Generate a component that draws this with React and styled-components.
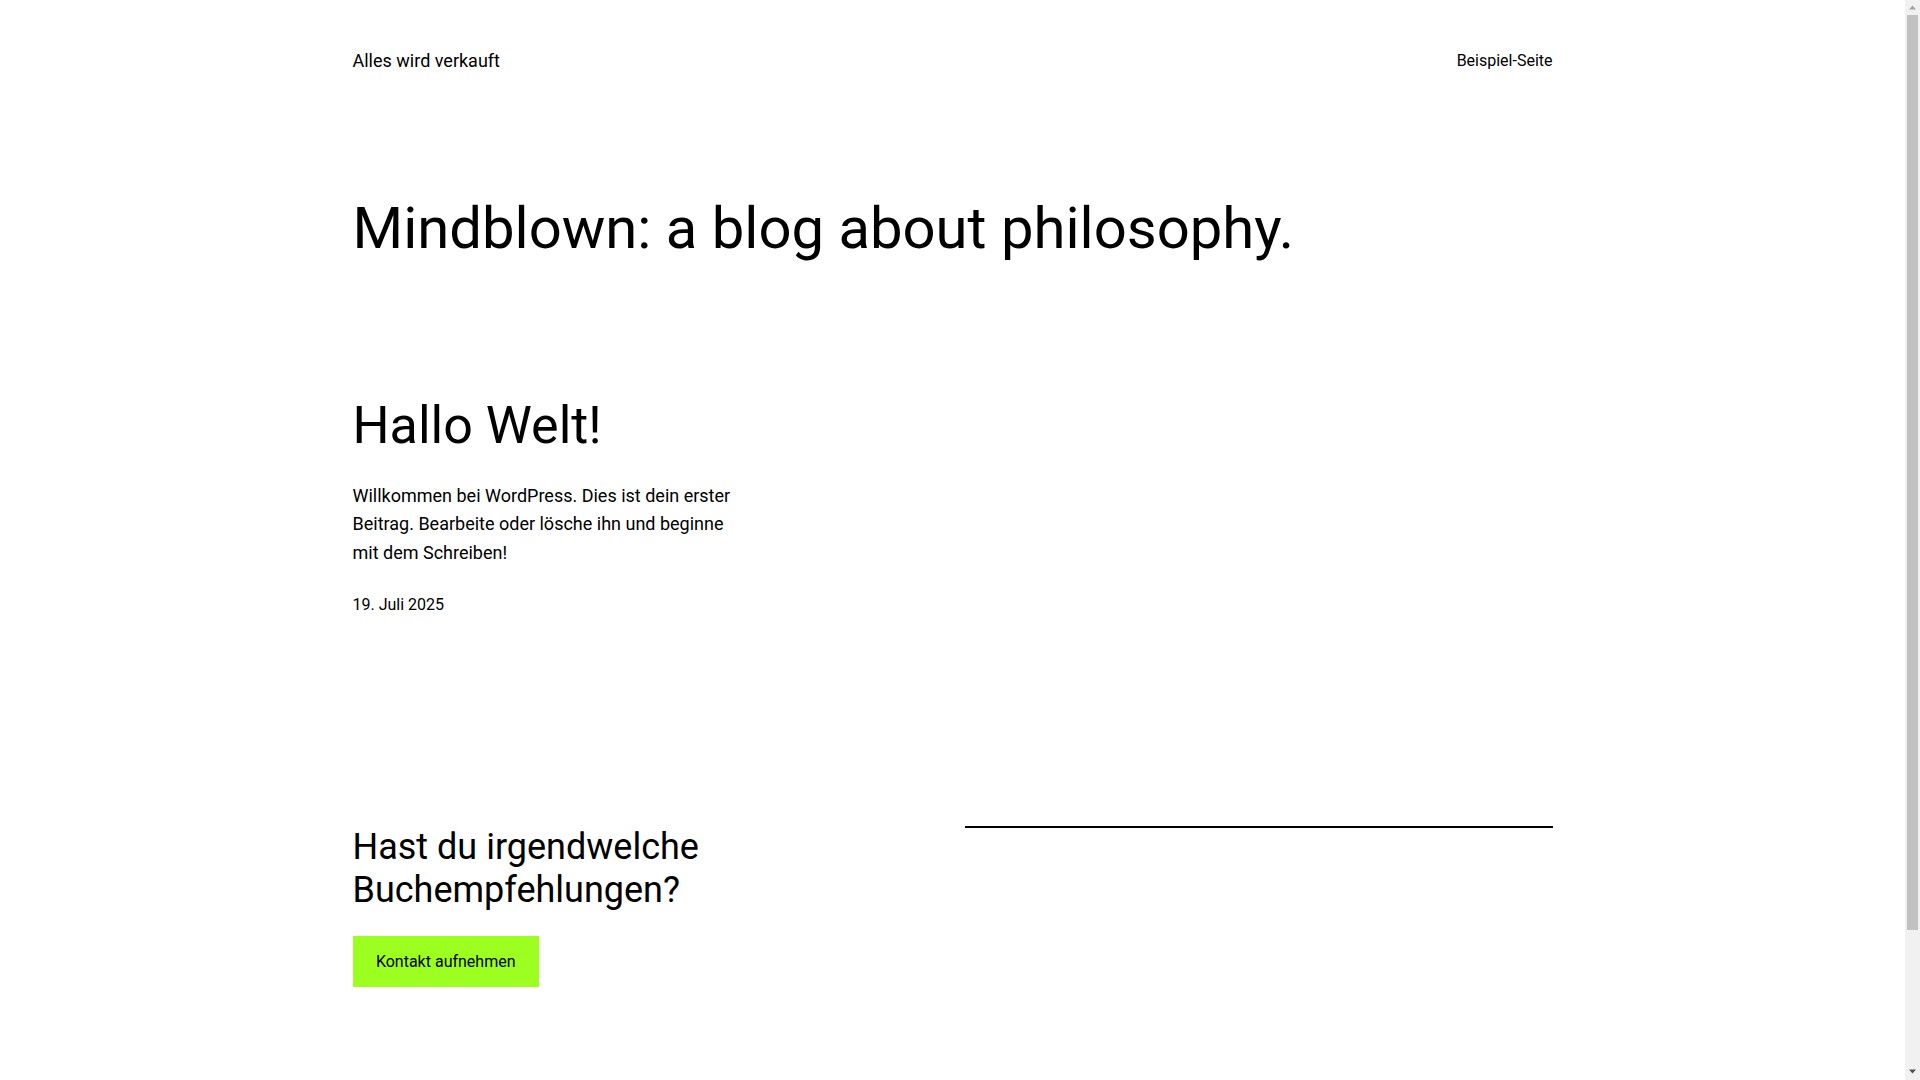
import React from "react";
import styled, { createGlobalStyle } from "styled-components";

const Global = createGlobalStyle`
  html, body { margin: 0; padding: 0; background: #fff; }
  body { font-family: Roboto, "Liberation Sans", sans-serif; color: #000; }
  * { box-sizing: border-box; }
`;

const Shell = styled.div`
  display: flex;
  align-items: flex-start;
`;

const Main = styled.main`
  flex: 1;
  min-width: 0;
`;

const Page = styled.div`
  width: 1200px;
  margin: 0 auto;
  padding-top: 50px;
  padding-bottom: 252px;
`;

const Header = styled.header`
  display: flex;
  justify-content: space-between;
  align-items: center;
`;

const SiteTitle = styled.a`
  font-size: 18px;
  line-height: 1.2;
  color: #000;
  text-decoration: none;
`;

const NavLink = styled.a`
  font-size: 16px;
  line-height: 1.2;
  color: #000;
  text-decoration: none;
`;

const PageTitle = styled.h1`
  margin: 125.4px 0 0;
  font-weight: 400;
  font-size: 58px;
  line-height: 1.1;
`;

const PostGrid = styled.div`
  display: grid;
  grid-template-columns: repeat(3, 1fr);
  gap: 24px;
  margin-top: 135.8px;
`;

const Post = styled.article`
  display: flex;
  flex-direction: column;
`;

const PostTitle = styled.h2`
  margin: 0;
  font-weight: 400;
  font-size: 52px;
  line-height: 1.1;
`;

const Excerpt = styled.p`
  margin: 28.3px 0 0;
  font-size: 18px;
  line-height: 28.3px;
`;

const PostDate = styled.time`
  display: block;
  margin-top: 25.6px;
  font-size: 16px;
  line-height: 1.5;
`;

const Cta = styled.section`
  display: grid;
  grid-template-columns: 1fr 1fr;
  gap: 24px;
  margin-top: 209.2px;
  align-items: start;
`;

const CtaText = styled.div`
  display: flex;
  flex-direction: column;
  align-items: flex-start;
`;

const CtaHeading = styled.h2`
  margin: 0;
  font-weight: 400;
  font-size: 36px;
  line-height: 43.2px;
`;

const Button = styled.a`
  display: inline-block;
  margin-top: 24px;
  background: #9dff20;
  color: #000;
  text-decoration: none;
  font-size: 16px;
  line-height: 1.2;
  padding: 15.75px 23.4px;
`;

const Rule = styled.hr`
  margin: 0 0 0;
  border: none;
  border-top: 2px solid #000;
`;

/* fake classic scrollbar at the right edge of the window */
const ScrollBar = styled.div`
  position: sticky;
  top: 0;
  flex: 0 0 15px;
  width: 15px;
  height: 100vh;
  background: #f1f1f1;
  display: flex;
  flex-direction: column;
`;

const ScrollButton = styled.div`
  flex: 0 0 15px;
  display: flex;
  align-items: center;
  justify-content: center;
`;

const Track = styled.div`
  flex: 1;
  padding: 0 2px;
`;

const Thumb = styled.div`
  height: 915px;
  background: #c1c1c1;
`;

const Arrow = ({ up, color }) => (
  <svg width="15" height="15" viewBox="0 0 15 15">
    {up ? (
      <polygon points="4,9.5 11,9.5 7.5,5.5" fill={color} />
    ) : (
      <polygon points="4,4.5 11,4.5 7.5,8.5" fill={color} />
    )}
  </svg>
);

export default function App() {
  return (
    <>
      <Global />
      <Shell>
        <Main>
          <Page>
            <Header>
              <SiteTitle href="#">Alles wird verkauft</SiteTitle>
              <NavLink href="#">Beispiel-Seite</NavLink>
            </Header>
            <PageTitle>Mindblown: a blog about philosophy.</PageTitle>
            <PostGrid>
              <Post>
                <PostTitle>Hallo Welt!</PostTitle>
                <Excerpt>
                  Willkommen bei WordPress. Dies ist dein erster Beitrag. Bearbeite oder lösche ihn und beginne mit dem Schreiben!
                </Excerpt>
                <PostDate>19. Juli 2025</PostDate>
              </Post>
            </PostGrid>
            <Cta>
              <CtaText>
                <CtaHeading>
                  Hast du irgendwelche
                  <br />
                  Buchempfehlungen?
                </CtaHeading>
                <Button href="#">Kontakt aufnehmen</Button>
              </CtaText>
              <div>
                <Rule />
              </div>
            </Cta>
          </Page>
        </Main>
        <ScrollBar>
          <ScrollButton>
            <Arrow up color="#a3a3a3" />
          </ScrollButton>
          <Track>
            <Thumb />
          </Track>
          <ScrollButton>
            <Arrow color="#505050" />
          </ScrollButton>
        </ScrollBar>
      </Shell>
    </>
  );
}
